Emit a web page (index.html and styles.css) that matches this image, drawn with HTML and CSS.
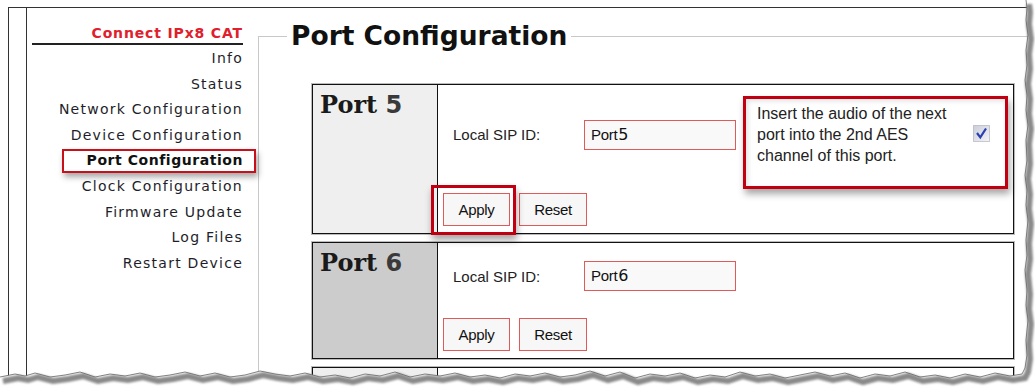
FILE: index.html
```html
<!DOCTYPE html>
<html lang="en">
<head>
<meta charset="utf-8">
<title>Port Configuration</title>
<link rel="stylesheet" href="styles.css">
</head>
<body>
<div class="page">
  <div class="gutter"></div>
  <nav class="sidebar">
    <div class="brand">Connect IPx8 CAT</div>
    <ul class="menu">
      <li>Info</li>
      <li>Status</li>
      <li>Network Configuration</li>
      <li>Device Configuration</li>
      <li class="active">Port Configuration<span class="mark mark-nav"></span></li>
      <li>Clock Configuration</li>
      <li>Firmware Update</li>
      <li>Log Files</li>
      <li>Restart Device</li>
    </ul>
  </nav>
  <fieldset class="panel">
    <legend>Port Configuration</legend>
    <div class="ports">
      <section class="port">
        <div class="port-name">Port <span class="num">5</span></div>
        <div class="port-body">
          <div class="field-row">
            <span class="field-label">Local SIP ID:</span>
            <div class="input">Port<span class="num-s">5</span></div>
            <div class="option">
              <p class="option-text">Insert the audio of the next port into the 2nd AES channel of this port.</p>
              <span class="checkbox">
                <svg width="17" height="17" viewBox="0 0 17 17" aria-hidden="true">
                  <defs>
                    <linearGradient id="cbg" x1="0" y1="0" x2="1" y2="1">
                      <stop offset="0" stop-color="#c9ced9"/>
                      <stop offset="1" stop-color="#f4f4f7"/>
                    </linearGradient>
                  </defs>
                  <rect x="0.5" y="0.5" width="16" height="16" fill="url(#cbg)" stroke="#9a9aa8" stroke-dasharray="1 1"/>
                  <path d="M4 8 L7.3 12.3 L13 3.5" fill="none" stroke="#2c3fb0" stroke-width="2.2"/>
                </svg>
              </span>
              <span class="mark mark-option"></span>
            </div>
          </div>
          <div class="actions">
            <span class="btn-wrap"><button class="btn">Apply</button><span class="mark mark-apply"></span></span>
            <button class="btn btn-reset">Reset</button>
          </div>
        </div>
      </section>
      <section class="port port-alt">
        <div class="port-name">Port <span class="num">6</span></div>
        <div class="port-body">
          <div class="field-row">
            <span class="field-label">Local SIP ID:</span>
            <div class="input">Port<span class="num-s">6</span></div>
          </div>
          <div class="actions">
            <button class="btn">Apply</button>
            <button class="btn btn-reset">Reset</button>
          </div>
        </div>
      </section>
      <section class="port port-stub">
        <div class="port-name"></div>
        <div class="port-body"></div>
      </section>
    </div>
  </fieldset>
</div>
<svg class="torn" width="1035" height="387" viewBox="0 0 1035 387" aria-hidden="true">
  <defs>
    <filter id="soft" x="-5%" y="-5%" width="110%" height="110%"><feGaussianBlur stdDeviation="1"/></filter>
  </defs>
  <polygon fill="#fff" points="1026,0 1027,8 1026,20 1028,35 1026,50 1027,65 1025,80 1027,95 1026,110 1028,125 1026,140 1027,160 1025,175 1027,190 1026,205 1028,220 1026,240 1027,255 1025,270 1027,290 1026,305 1028,320 1026,340 1027,355 1025,368 1022,374 1010,376 995,373 980,377 965,374 950,378 935,375 920,377 905,372 890,376 875,374 860,378 845,373 830,376 815,372 800,375 785,378 770,374 755,376 740,372 725,377 710,375 695,378 680,373 665,376 650,374 635,378 620,372 605,376 590,371 575,375 560,377 545,373 530,376 515,374 500,378 485,375 470,377 455,373 440,376 425,374 410,377 395,372 380,376 365,374 350,378 335,375 320,377 305,373 290,376 275,374 260,371 245,375 230,377 215,373 200,376 185,372 170,375 155,377 140,373 125,376 110,374 95,377 80,372 65,375 50,377 35,373 25,376 15,374 0,377 0,387 1035,387 1035,0"/>
  <polyline filter="url(#soft)" fill="none" stroke="#8a8a8a" stroke-width="6" transform="translate(3 4)" points="1026,0 1027,8 1026,20 1028,35 1026,50 1027,65 1025,80 1027,95 1026,110 1028,125 1026,140 1027,160 1025,175 1027,190 1026,205 1028,220 1026,240 1027,255 1025,270 1027,290 1026,305 1028,320 1026,340 1027,355 1025,368 1022,374 1010,376 995,373 980,377 965,374 950,378 935,375 920,377 905,372 890,376 875,374 860,378 845,373 830,376 815,372 800,375 785,378 770,374 755,376 740,372 725,377 710,375 695,378 680,373 665,376 650,374 635,378 620,372 605,376 590,371 575,375 560,377 545,373 530,376 515,374 500,378 485,375 470,377 455,373 440,376 425,374 410,377 395,372 380,376 365,374 350,378 335,375 320,377 305,373 290,376 275,374 260,371 245,375 230,377 215,373 200,376 185,372 170,375 155,377 140,373 125,376 110,374 95,377 80,372 65,375 50,377 35,373 25,376 15,374 0,377"/>
  <polyline fill="none" stroke="#666" stroke-width="0.8" points="1026,0 1027,8 1026,20 1028,35 1026,50 1027,65 1025,80 1027,95 1026,110 1028,125 1026,140 1027,160 1025,175 1027,190 1026,205 1028,220 1026,240 1027,255 1025,270 1027,290 1026,305 1028,320 1026,340 1027,355 1025,368 1022,374 1010,376 995,373 980,377 965,374 950,378 935,375 920,377 905,372 890,376 875,374 860,378 845,373 830,376 815,372 800,375 785,378 770,374 755,376 740,372 725,377 710,375 695,378 680,373 665,376 650,374 635,378 620,372 605,376 590,371 575,375 560,377 545,373 530,376 515,374 500,378 485,375 470,377 455,373 440,376 425,374 410,377 395,372 380,376 365,374 350,378 335,375 320,377 305,373 290,376 275,374 260,371 245,375 230,377 215,373 200,376 185,372 170,375 155,377 140,373 125,376 110,374 95,377 80,372 65,375 50,377 35,373 25,376 15,374 0,377"/>
</svg>
</body>
</html>
```

FILE: styles.css
```css
html, body {
  margin: 0;
  padding: 0;
  width: 1035px;
  height: 387px;
  overflow: hidden;
  background: #fff;
}

body {
  position: relative;
  font-family: "DejaVu Sans", sans-serif;
  color: #1e1e2a;
}

.page {
  margin: 7px 0 0 8px;
  border-top: 1px solid #333;
  border-left: 1px solid #333;
  display: flex;
  width: 1040px;
  height: 372px;
  overflow: hidden;
}

.gutter {
  flex: none;
  width: 17px;
  border-right: 1px solid #333;
}

.sidebar {
  flex: none;
  width: 231px;
  box-sizing: border-box;
  padding-right: 15px;
}

.brand {
  margin: 15px 0 0 5px;
  height: 20px;
  line-height: 20px;
  border-bottom: 2px solid #222;
  text-align: right;
  color: #e0202c;
  font-weight: bold;
  font-size: 14px;
  letter-spacing: 0.85px;
}

.menu {
  list-style: none;
  margin: 0;
  padding: 1px 0 0;
  text-align: right;
  font-size: 14px;
  line-height: 25.6px;
  letter-spacing: 1.25px;
  color: #1e1e2a;
}

.menu li {
  position: relative;
}

.menu .active {
  font-weight: bold;
  letter-spacing: 0.55px;
  color: #111;
}

.mark {
  position: absolute;
  border: 2px solid #c8101a;
  box-shadow: 2px 4px 6px rgba(0, 0, 0, 0.35);
  pointer-events: none;
}

.mark-nav {
  left: 35px;
  right: -13px;
  top: 1px;
  bottom: 1px;
}

.panel {
  flex: 1;
  min-width: 0;
  margin: 13px 0 0;
  padding: 0;
  border: 0;
  border-top: 1px solid #c8c8c8;
  border-left: 1px solid #c8c8c8;
}

.panel legend {
  margin-left: 28px;
  padding: 0 4px;
  font-family: "DejaVu Sans", sans-serif;
  font-weight: bold;
  font-size: 26.5px;
  line-height: 30px;
  color: #111;
}

.ports {
  margin: 33px 0 0 53px;
  display: flex;
  flex-direction: column;
  gap: 8px;
}

.port {
  width: 702px;
  box-sizing: border-box;
  border: 1px solid #111;
  box-shadow: 0 0 0 1px #bbb;
  display: grid;
  grid-template-columns: 125px 1fr;
}

.port-stub {
  height: 60px;
}

.port-name {
  box-sizing: border-box;
  background: #efefef;
  border-right: 1px solid #111;
  padding: 6px 0 0 7px;
  font-family: "DejaVu Serif", serif;
  font-weight: bold;
  font-size: 24px;
  line-height: 28px;
  color: #1a1a1a;
}

.port-alt .port-name {
  background: #cccccc;
}

.port-name .num {
  font-family: "DejaVu Sans", sans-serif;
  font-weight: bold;
  font-size: 24px;
  color: #3a3a3a;
}

.port-body {
  padding: 18px 0 7px 5px;
}

.field-row {
  display: flex;
  align-items: center;
  margin-left: 10px;
}

.field-label {
  flex: none;
  width: 131px;
  font-family: "Liberation Sans", sans-serif;
  font-size: 15px;
  color: #222;
}

.input {
  flex: none;
  width: 152px;
  height: 30px;
  box-sizing: border-box;
  border: 1px solid #e05a5a;
  background: #f9f9f9;
  padding-left: 6px;
  font-family: "Liberation Sans", sans-serif;
  font-size: 15px;
  line-height: 28px;
  color: #111;
  letter-spacing: -0.3px;
}

.num-s {
  font-family: "DejaVu Sans", sans-serif;
  font-size: 16px;
  margin-left: 1px;
}

.option {
  position: relative;
  margin-left: 21px;
  display: flex;
  align-items: center;
  gap: 16px;
}

.option-text {
  width: 200px;
  margin: 0;
  font-family: "Liberation Sans", sans-serif;
  font-size: 16px;
  line-height: 21px;
  color: #222;
}

.checkbox {
  display: block;
  width: 17px;
  height: 17px;
  margin-top: -3px;
}

.checkbox svg {
  display: block;
}

.mark-option {
  left: -14px;
  top: -7px;
  right: -18px;
  bottom: -23px;
  border: 3px solid #c00010;
  box-shadow: 2px 5px 7px rgba(0, 0, 0, 0.35), inset 2px 2px 5px rgba(0, 0, 0, 0.12);
}

.actions {
  display: flex;
  gap: 9px;
  margin-top: 27px;
}

.btn-wrap {
  position: relative;
  display: flex;
}

.btn {
  width: 67px;
  height: 33px;
  margin: 0;
  padding: 0;
  border: 1px solid #e05a5a;
  background: #f7f7f7;
  font-family: "Liberation Sans", sans-serif;
  font-size: 15px;
  color: #111;
  letter-spacing: -0.3px;
}

.btn-reset {
  width: 68px;
}

.mark-apply {
  left: -12px;
  top: -8px;
  right: -6px;
  bottom: -9px;
  border: 3px solid #c00010;
  box-shadow: 1px 5px 7px rgba(0, 0, 0, 0.35);
}

.torn {
  position: absolute;
  left: 0;
  top: 0;
  pointer-events: none;
}
```
